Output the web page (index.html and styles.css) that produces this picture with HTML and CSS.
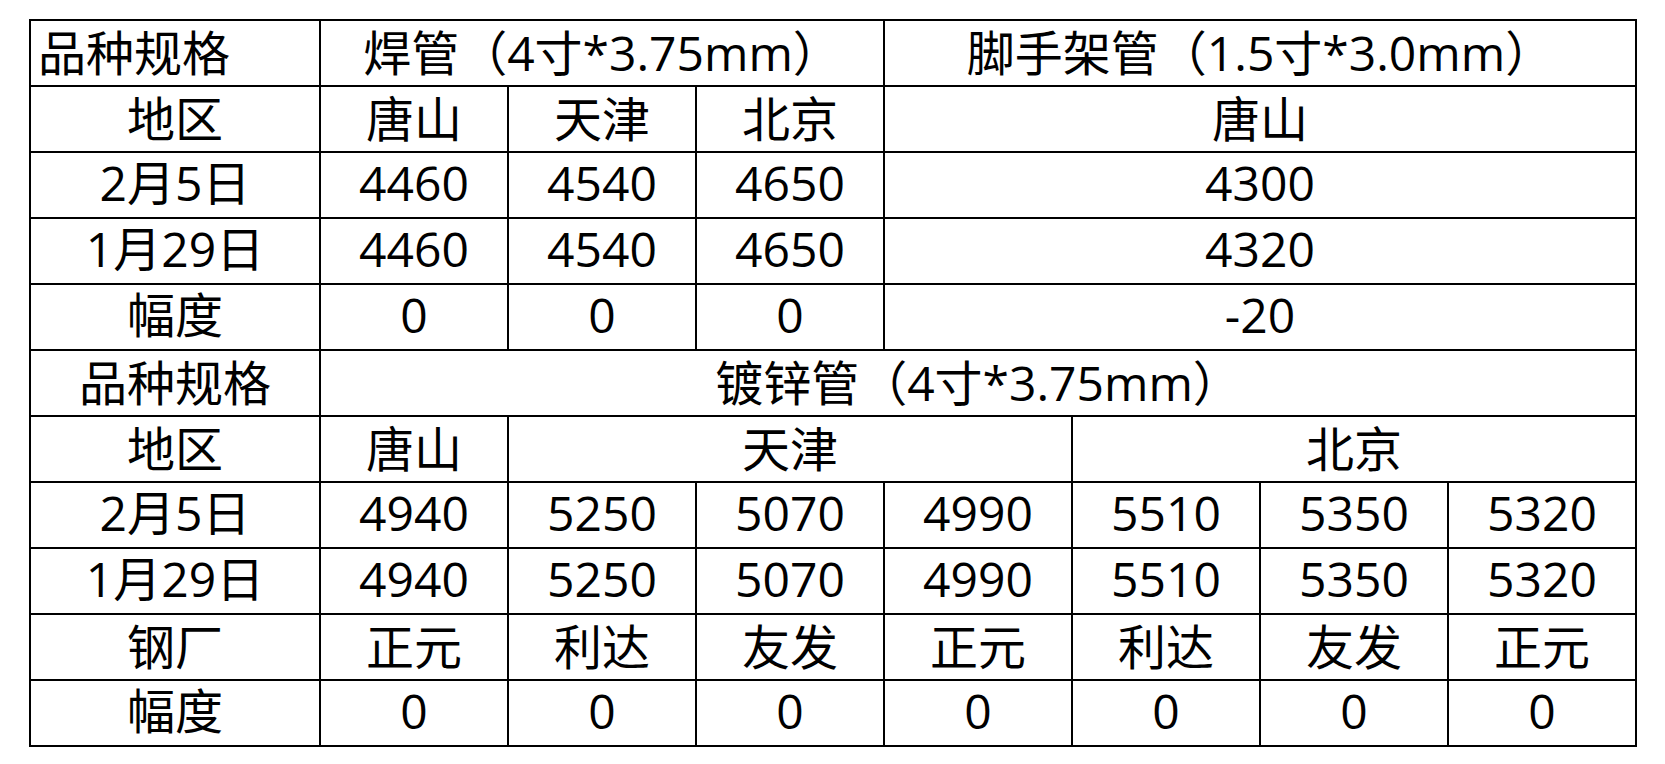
FILE: index.html
```html
<!DOCTYPE html>
<html lang="zh-CN">
<head>
<meta charset="utf-8">
<title>钢管价格</title>
<link rel="stylesheet" href="styles.css">
</head>
<body>
<div class="page">
<table class="price">
<colgroup>
<col class="c-label">
<col class="c-val"><col class="c-val"><col class="c-val"><col class="c-val">
<col class="c-val"><col class="c-val"><col class="c-val">
</colgroup>
<tbody>
<tr><td class="left">品种规格</td><td colspan="3">焊管（4寸*3.75mm）</td><td colspan="4">脚手架管（1.5寸*3.0mm）</td></tr>
<tr><td>地区</td><td>唐山</td><td>天津</td><td>北京</td><td colspan="4">唐山</td></tr>
<tr class="nums"><td>2月5日</td><td>4460</td><td>4540</td><td>4650</td><td colspan="4">4300</td></tr>
<tr class="nums"><td>1月29日</td><td>4460</td><td>4540</td><td>4650</td><td colspan="4">4320</td></tr>
<tr class="nums"><td>幅度</td><td>0</td><td>0</td><td>0</td><td colspan="4">-20</td></tr>
<tr><td>品种规格</td><td colspan="7">镀锌管（4寸*3.75mm）</td></tr>
<tr><td>地区</td><td>唐山</td><td colspan="3">天津</td><td colspan="3">北京</td></tr>
<tr class="nums"><td>2月5日</td><td>4940</td><td>5250</td><td>5070</td><td>4990</td><td>5510</td><td>5350</td><td>5320</td></tr>
<tr class="nums"><td>1月29日</td><td>4940</td><td>5250</td><td>5070</td><td>4990</td><td>5510</td><td>5350</td><td>5320</td></tr>
<tr><td>钢厂</td><td>正元</td><td>利达</td><td>友发</td><td>正元</td><td>利达</td><td>友发</td><td>正元</td></tr>
<tr class="nums"><td>幅度</td><td>0</td><td>0</td><td>0</td><td>0</td><td>0</td><td>0</td><td>0</td></tr>
</tbody>
</table>
</div>
</body>
</html>
```

FILE: styles.css
```css
html, body {
  margin: 0;
  padding: 0;
  background: #ffffff;
}
.page {
  padding: 19px 0 0 29px;
}
.price {
  border-collapse: collapse;
  table-layout: fixed;
  width: 1606px;
  font-family: "Open Sans", "Noto Sans CJK SC", sans-serif;
  font-size: 48px;
  color: #000000;
}
.c-label { width: 290px; }
.c-val { width: 188px; }
.price td {
  border: 2px solid #000000;
  height: 64px;
  padding: 0;
  text-align: center;
  vertical-align: middle;
  line-height: 1.2;
  white-space: nowrap;
}
.price .nums td {
  padding-bottom: 5px;
  height: 59px;
}
.price td.left {
  text-align: left;
  padding-left: 7px;
}
```
